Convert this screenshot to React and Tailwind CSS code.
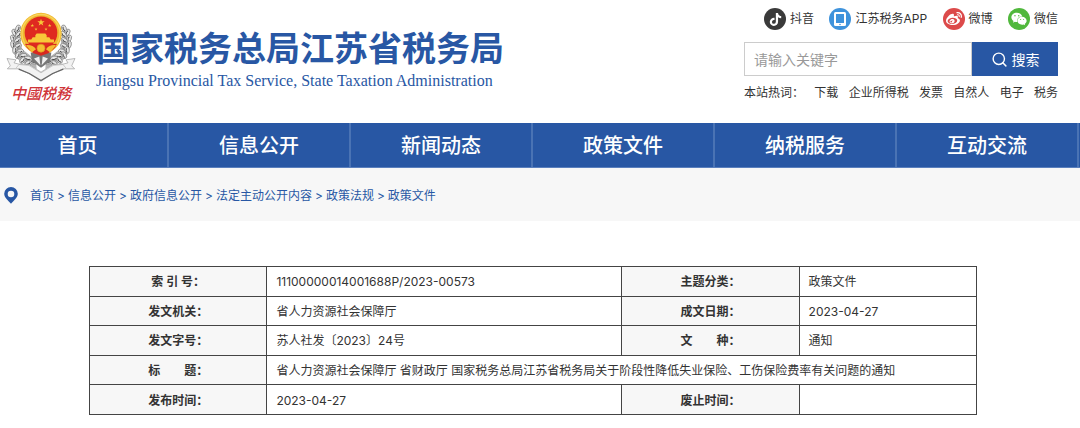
import { FaTiktok, FaWeibo, FaWeixin } from 'react-icons/fa';
import { FiSearch } from 'react-icons/fi';

const menu = ['信息公开', '新闻动态', '政策文件', '纳税服务', '互动交流'];

const migas = ['首页', '信息公开', '政府信息公开', '法定主动公开内容', '政策法规', '政策文件'];

const palabras = ['下载', '企业所得税', '发票', '自然人', '电子', '税务'];

const filas = [
  ['索 引 号：', '11100000014001688P/2023-00573', '主题分类：', '政策文件'],
  ['发文机关：', '省人力资源社会保障厅', '成文日期：', '2023-04-27'],
  ['发文字号：', '苏人社发〔2023〕24号', '文\u3000\u3000种：', '通知'],
  ['标\u3000\u3000题：', '省人力资源社会保障厅 省财政厅 国家税务总局江苏省税务局关于阶段性降低失业保险、工伤保险费率有关问题的通知'],
  ['发布时间：', '2023-04-27', '废止时间：', ''],
];

// x, y, giro
const hojas = [
  [54, 86, 20], [44, 98, -30], [56, 104, 40], [39, 116, -20], [53, 122, 50],
  [39, 134, -10], [54, 139, 60], [45, 151, 5], [60, 155, 70], [54, 166, 25],
  [70, 168, 80], [68, 181, 40], [84, 176, 100], [85, 190, 60], [100, 185, 110],
];

const ESTRELLA = 'M0-10 2.4-3.2 9.5-3.1 3.8 1.2 5.9 8.1 0 4-5.9 8.1-3.8 1.2-9.5-3.1-2.4-3.2Z';

function Rama() {
  return (
    <g>
      <path d="M56 78C24 106 28 165 66 188L110 208 108 180 66 148Z" fill="#b5b5b5" />
      {hojas.map(([x, y, giro]) => (
        <g key={`${x}-${y}`} transform={`translate(${x} ${y}) rotate(${giro})`}>
          <ellipse rx="7" ry="11" fill="#e6e6e6" stroke="#777" strokeWidth="2" />
          <path d="M1-6Q5 1 0 8" fill="none" stroke="#4a4a4a" strokeWidth="3" />
        </g>
      ))}
    </g>
  );
}

function Emblema() {
  return (
    <svg viewBox="18 34 210 212" className="h-[71px] w-[70px]" aria-hidden="true">
      <Rama />
      <g transform="translate(246 0) scale(-1 1)">
        <Rama />
      </g>
      <path d="M92 158H154L150 184 123 204 96 184Z" fill="#777" />
      <path d="M102 176 118 170 121 196ZM144 176 128 170 125 196Z" fill="#eee" />
      <circle cx="123" cy="101" r="62" fill="#f0b92f" />
      <circle cx="123" cy="101" r="57" fill="none" stroke="#f9d45c" strokeWidth="4" />
      <circle cx="123" cy="99" r="49" fill="#df2a20" />
      <g fill="#f8c839">
        <path transform="translate(123 68) scale(1.15)" d={ESTRELLA} />
        <path transform="translate(97 77) scale(.55)" d={ESTRELLA} />
        <path transform="translate(149 77) scale(.55)" d={ESTRELLA} />
        <path transform="translate(108 88) scale(.5)" d={ESTRELLA} />
        <path transform="translate(138 88) scale(.5)" d={ESTRELLA} />
        <path d="M106 106 110 101H136L140 106V112H148L152 119H162V128H84V119H94L98 112H106Z" />
      </g>
      <path d="M75 132 99 134Q110 145 123 142 136 145 147 134L171 132Q163 152 145 160L123 168 101 160Q83 152 75 132Z" fill="#d8281f" />
      <path d="M78 136Q98 134 108 148L95 158ZM168 136Q148 134 138 148L151 158Z" fill="#f4bd31" />
      <circle cx="123" cy="145" r="12" fill="#f4bd31" stroke="#d99a1e" strokeWidth="2" />
      <path d="M21 176 48 180 42 189 57 193 87 194 123 217 159 194 189 193 204 189 198 180 225 176 215 198 224 207 190 207 158 222 123 244 88 222 56 207 22 207 31 198Z" fill="#f2f2f2" stroke="#9a9a9a" strokeWidth="2" />
      <path d="M48 205 57 194 87 197 123 219 159 197 189 194 198 205" fill="none" stroke="#b5b5b5" strokeWidth="2" />
      <path d="M56 208 88 221 123 242 158 221 190 208" fill="none" stroke="#666" strokeWidth="4" />
    </svg>
  );
}

function Tableta() {
  return (
    <svg viewBox="0 0 22 22" className="size-[22px]" aria-hidden="true">
      <rect x="5" y="4" width="12" height="14" rx="1.5" fill="#fff" />
      <rect x="7" y="6" width="8" height="9" fill="#3f93dc" />
      <circle cx="11" cy="16.5" r=".8" fill="#3f93dc" />
    </svg>
  );
}

const redes = [
  { nombre: '抖音', fondo: 'bg-[#3a3a3a]', icono: <FaTiktok size={13} /> },
  { nombre: '江苏税务APP', fondo: 'bg-[#3f93dc]', icono: <Tableta /> },
  { nombre: '微博', fondo: 'bg-[#dc4a4a]', icono: <FaWeibo size={16} /> },
  { nombre: '微信', fondo: 'bg-[#50b83c]', icono: <FaWeixin size={16} /> },
];

function Cabecera() {
  return (
    <header className="flex justify-between pl-[6px] pr-[22px] h-[123px]">
      <div className="flex">
        <div className="flex w-[70px] flex-col items-center pt-[11px]">
          <Emblema />
          <span className="text-[15px] leading-[24px] font-medium italic text-[#cf3438] whitespace-nowrap">中國税務</span>
        </div>
        <div className="pt-[28px] pl-[20px] text-[#2857a4] whitespace-nowrap">
          <h1 className="text-[34px] leading-[42px] font-bold">国家税务总局江苏省税务局</h1>
          <p className="font-['Liberation_Serif',serif] text-[16px] leading-[22px]">
            Jiangsu Provincial Tax Service, State Taxation Administration
          </p>
        </div>
      </div>

      <div className="w-[314px] pt-[8px]">
        <div className="flex justify-between pl-[20px]">
          {redes.map(({ nombre, fondo, icono }) => (
            <a key={nombre} href="#" className="flex items-center gap-1 text-[12px] leading-[22px] whitespace-nowrap">
              <span className={`flex size-[22px] items-center justify-center rounded-full text-white ${fondo}`}>{icono}</span>
              {nombre}
            </a>
          ))}
        </div>
        <form className="mt-[12px] flex h-[34px]">
          <input
            type="text"
            aria-label="请输入关键字"
            placeholder="请输入关键字"
            className="min-w-0 flex-1 border border-[#ccc] px-[9px] text-[14px] placeholder:text-[#999]"
          />
          <button type="button" className="flex w-[86px] items-center justify-center gap-1 bg-[#2857a4] text-[14px] text-white">
            <FiSearch size={17} /> 搜索
          </button>
        </form>
        <div className="mt-[7px] flex justify-between text-[12px] leading-[20px] whitespace-nowrap">
          <span>本站热词：</span>
          {palabras.map((p) => (
            <a key={p} href="#">{p}</a>
          ))}
        </div>
      </div>
    </header>
  );
}

export default function App() {
  return (
    <div className="min-h-screen bg-white font-['Inter','Noto_Sans_CJK_SC',sans-serif] text-[#333]">
      <Cabecera />

      <nav className="grid grid-cols-[169fr_repeat(5,182fr)] border-b border-[#5a7fbd] bg-[#2857a4] pr-[1px] text-center text-[20px] leading-[42px] font-medium text-white">
        <a href="#" className="border-r-2 border-[#4a73b4] pt-[2px] pr-[12px]">首页</a>
        {menu.map((m) => (
          <a key={m} href="#" className="border-r-2 border-[#4a73b4] pt-[2px]">{m}</a>
        ))}
      </nav>

      <div className="flex h-[53px] items-center bg-[#f7f7f7] pt-[2px] pl-[4px] text-[12px] text-[#2857a4]">
        <svg viewBox="0 0 14 17" className="h-[17px] w-[14px]" aria-hidden="true">
          <path d="M7 0A6.8 6.8 0 0 0 .2 6.8C.2 11 5 14.2 7 16.8 9 14.2 13.8 11 13.8 6.8A6.8 6.8 0 0 0 7 0ZM7 3.7A3.3 3.3 0 1 1 7 10.3 3.3 3.3 0 0 1 7 3.7Z" fill="#2857a4" fillRule="evenodd" />
        </svg>
        <div className="flex gap-[3px] pl-[12px]">
          {migas.map((m, i) => (
            <span key={m} className="flex gap-[3px]">
              {i > 0 && <span>&gt;</span>}
              <a href="#">{m}</a>
            </span>
          ))}
        </div>
      </div>

      <main className="pt-[45px] pr-[103px] pl-[89px]">
        <table className="h-[149px] w-full table-fixed border-collapse text-[12px] leading-[18px]">
          <colgroup>
            <col className="w-1/5" />
            <col className="w-2/5" />
            <col className="w-1/5" />
            <col className="w-1/5" />
          </colgroup>
          <tbody>
            {filas.map(([t1, v1, t2, v2]) => (
              <tr key={t1}>
                <th scope="row" className="border border-[#444] bg-[#f7f7f7] pt-[2px] font-bold">{t1}</th>
                <td colSpan={t2 ? 1 : 3} className="border border-[#444] pt-[2px] pl-[9px]">{v1}</td>
                {t2 && <th scope="row" className="border border-[#444] bg-[#f7f7f7] pt-[2px] font-bold">{t2}</th>}
                {t2 && <td className="border border-[#444] pt-[2px] pl-[9px]">{v2}</td>}
              </tr>
            ))}
          </tbody>
        </table>
      </main>
    </div>
  );
}
